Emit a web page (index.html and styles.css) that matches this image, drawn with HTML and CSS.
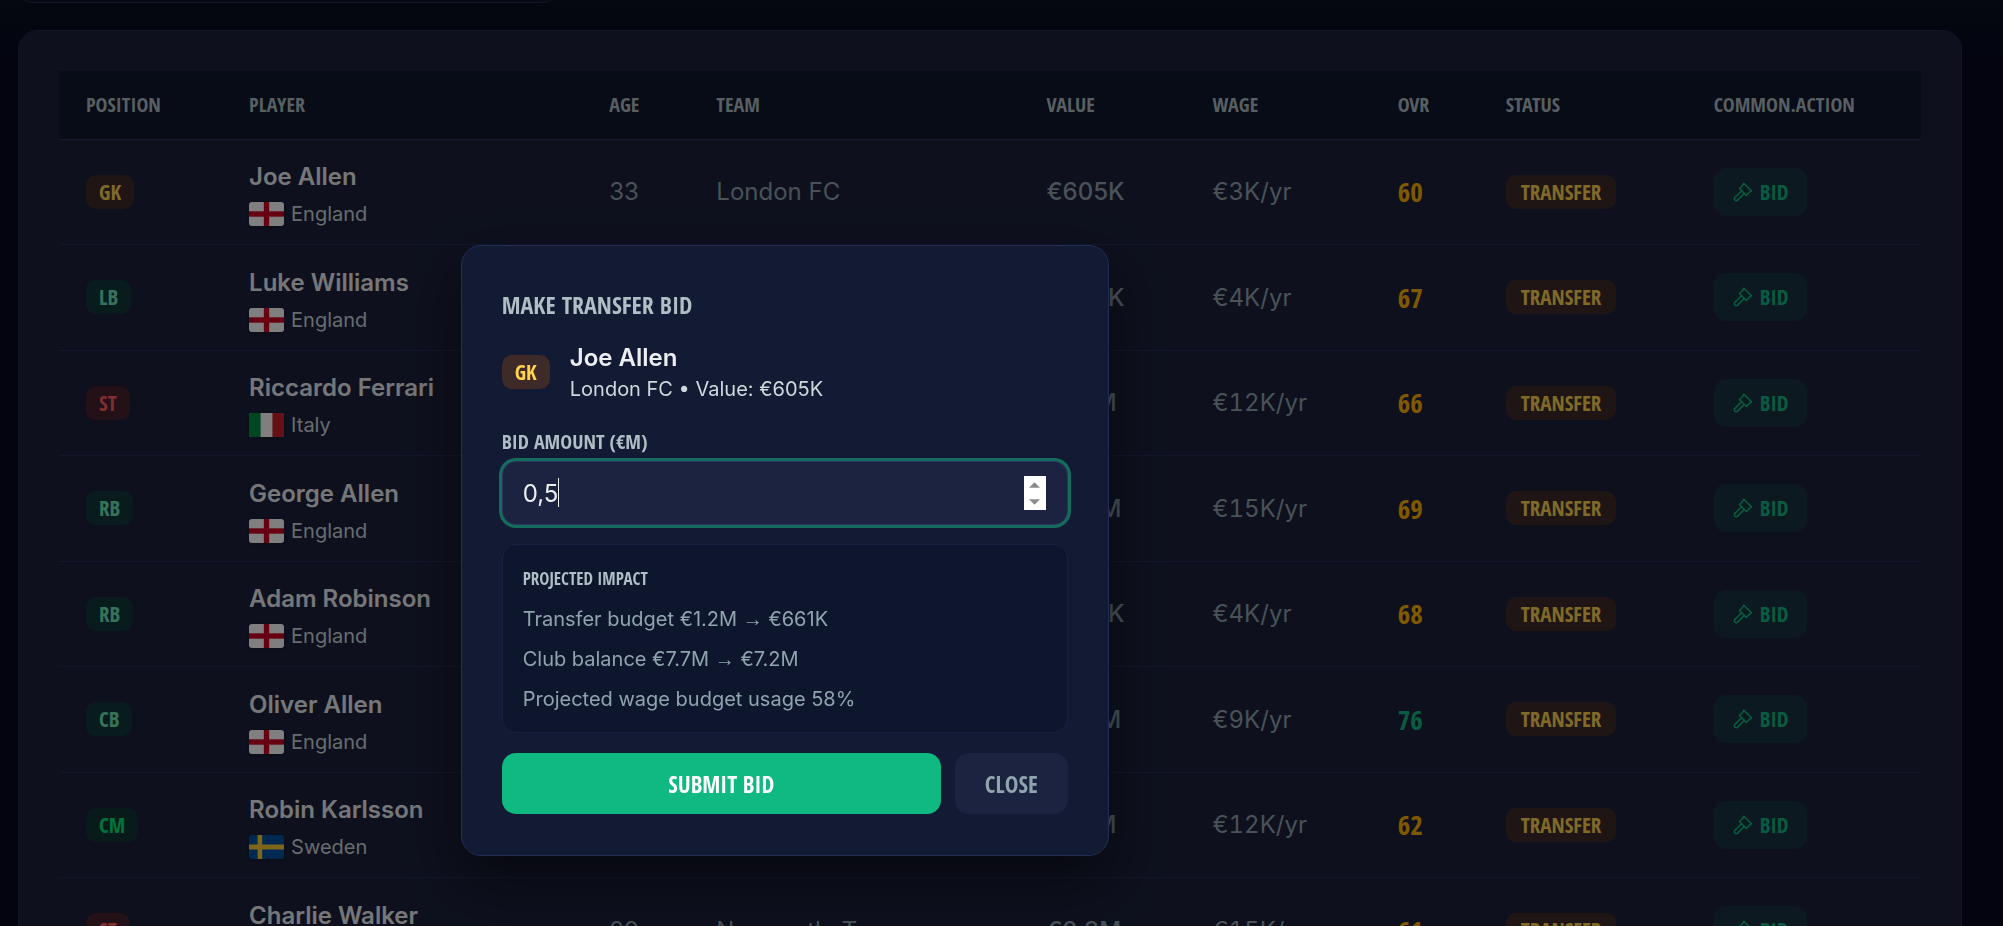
FILE: index.html
```html
<!DOCTYPE html>
<html lang="en">
<head>
  <meta charset="UTF-8" />
  <meta name="viewport" content="width=device-width, initial-scale=1.0" />
  <title>Transfer Market</title>
  <link rel="stylesheet" href="styles.css">
</head>
<body>
  <svg class="sprite" aria-hidden="true">
    <symbol id="gavel" viewBox="0 0 20 20">
      <path d="M10.8 1.2 18.5 8.9 16.4 10.4 13.3 13.5 6.5 6.5 9.3 3.8Z" />
      <path d="M8.6 8.7 1.9 15.4a1.9 1.9 0 0 0 2.7 2.7L11.3 11.4" />
    </symbol>
    <symbol id="flag-en" viewBox="0 0 35 24">
      <path fill="#fff" d="M0 0h35v24H0z" />
      <path fill="#e9a0b0" d="M14.5 0h6v24h-6zM0 9h35v6H0z" />
      <path fill="#ce0020" d="M15 0h5v24h-5zM0 9.5h35v5H0z" />
    </symbol>
    <symbol id="flag-it" viewBox="0 0 35 24">
      <path fill="#fff" d="M0 0h35v24H0z" />
      <path fill="#008c45" d="M0 0h11.6v24H0z" />
      <path fill="#cd212a" d="M23.4 0H35v24H23.4z" />
    </symbol>
    <symbol id="flag-se" viewBox="0 0 35 24">
      <path fill="#0052a4" d="M0 0h35v24H0z" />
      <path fill="#fecb34" d="M8.6 0h4.6v24H8.6zM0 9.6h35v4.8H0z" />
    </symbol>
  </svg>

  <div class="filters"></div>

  <main class="panel">
    <table class="players">
      <colgroup>
        <col class="col-pos"><col class="col-player"><col class="col-age"><col class="col-team"><col class="col-value"><col class="col-wage"><col class="col-ovr"><col class="col-status"><col class="col-action">
      </colgroup>
      <thead>
        <tr>
          <th>Position</th><th>Player</th><th>Age</th><th>Team</th><th>Value</th><th>Wage</th><th>OVR</th><th>Status</th><th>common.action</th>
        </tr>
      </thead>
      <tbody>
        <tr>
          <td><span class="badge gk">GK</span></td>
          <td><div class="name">Joe Allen</div><div class="nation"><svg class="flag"><use href="#flag-en" /></svg>England</div></td>
          <td>33</td><td>London FC</td><td class="value">€605K</td><td class="wage">€3K/yr</td>
          <td class="ovr">60</td>
          <td><span class="badge listed">TRANSFER</span></td>
          <td><button class="bid"><svg class="icon"><use href="#gavel" /></svg>BID</button></td>
        </tr>
        <tr>
          <td><span class="badge def">LB</span></td>
          <td><div class="name">Luke Williams</div><div class="nation"><svg class="flag"><use href="#flag-en" /></svg>England</div></td>
          <td>27</td><td>London FC</td><td class="value">€905K</td><td class="wage">€4K/yr</td>
          <td class="ovr">67</td>
          <td><span class="badge listed">TRANSFER</span></td>
          <td><button class="bid"><svg class="icon"><use href="#gavel" /></svg>BID</button></td>
        </tr>
        <tr>
          <td><span class="badge st">ST</span></td>
          <td><div class="name">Riccardo Ferrari</div><div class="nation"><svg class="flag"><use href="#flag-it" /></svg>Italy</div></td>
          <td>28</td><td>London FC</td><td class="value">€1.9M</td><td class="wage">€12K/yr</td>
          <td class="ovr">66</td>
          <td><span class="badge listed">TRANSFER</span></td>
          <td><button class="bid"><svg class="icon"><use href="#gavel" /></svg>BID</button></td>
        </tr>
        <tr>
          <td><span class="badge def">RB</span></td>
          <td><div class="name">George Allen</div><div class="nation"><svg class="flag"><use href="#flag-en" /></svg>England</div></td>
          <td>26</td><td>London FC</td><td class="value">€2.9M</td><td class="wage">€15K/yr</td>
          <td class="ovr">69</td>
          <td><span class="badge listed">TRANSFER</span></td>
          <td><button class="bid"><svg class="icon"><use href="#gavel" /></svg>BID</button></td>
        </tr>
        <tr>
          <td><span class="badge def">RB</span></td>
          <td><div class="name">Adam Robinson</div><div class="nation"><svg class="flag"><use href="#flag-en" /></svg>England</div></td>
          <td>31</td><td>London FC</td><td class="value">€905K</td><td class="wage">€4K/yr</td>
          <td class="ovr">68</td>
          <td><span class="badge listed">TRANSFER</span></td>
          <td><button class="bid"><svg class="icon"><use href="#gavel" /></svg>BID</button></td>
        </tr>
        <tr>
          <td><span class="badge def">CB</span></td>
          <td><div class="name">Oliver Allen</div><div class="nation"><svg class="flag"><use href="#flag-en" /></svg>England</div></td>
          <td>30</td><td>London FC</td><td class="value">€2.6M</td><td class="wage">€9K/yr</td>
          <td class="ovr high">76</td>
          <td><span class="badge listed">TRANSFER</span></td>
          <td><button class="bid"><svg class="icon"><use href="#gavel" /></svg>BID</button></td>
        </tr>
        <tr>
          <td><span class="badge mid">CM</span></td>
          <td><div class="name">Robin Karlsson</div><div class="nation"><svg class="flag"><use href="#flag-se" /></svg>Sweden</div></td>
          <td>24</td><td>London FC</td><td class="value">€1.8M</td><td class="wage">€12K/yr</td>
          <td class="ovr">62</td>
          <td><span class="badge listed">TRANSFER</span></td>
          <td><button class="bid"><svg class="icon"><use href="#gavel" /></svg>BID</button></td>
        </tr>
        <tr>
          <td><span class="badge st">ST</span></td>
          <td><div class="name">Charlie Walker</div><div class="nation"><svg class="flag"><use href="#flag-en" /></svg>England</div></td>
          <td>29</td><td>Newcastle T</td><td class="value">€2.3M</td><td class="wage">€15K/yr</td>
          <td class="ovr">61</td>
          <td><span class="badge listed">TRANSFER</span></td>
          <td><button class="bid"><svg class="icon"><use href="#gavel" /></svg>BID</button></td>
        </tr>
      </tbody>
    </table>
  </main>

  <div class="overlay">
    <form class="modal" role="dialog" aria-labelledby="modal-title" onsubmit="return false">
      <h2 class="modal-title" id="modal-title">Make transfer bid</h2>
      <div class="target">
        <span class="badge gk">GK</span>
        <div>
          <div class="target-name">Joe Allen</div>
          <div class="target-info">London FC • Value: €605K</div>
        </div>
      </div>
      <label class="field-label" for="bid-amount">Bid amount (€M)</label>
      <div class="field">
        <input type="text" id="bid-amount" inputmode="decimal" value="0,5" />
        <span class="caret"></span>
        <div class="spinner">
          <button type="button" aria-label="Increase"><svg viewBox="0 0 12 6"><path d="M6 0 12 6H0z" /></svg></button>
          <button type="button" aria-label="Decrease"><svg viewBox="0 0 12 6"><path d="M0 0h12L6 6z" /></svg></button>
        </div>
      </div>
      <section class="impact">
        <h3>Projected impact</h3>
        <p>Transfer budget €1.2M <span class="arrow">→</span> €661K</p>
        <p>Club balance €7.7M <span class="arrow">→</span> €7.2M</p>
        <p>Projected wage budget usage 58%</p>
      </section>
      <div class="actions">
        <button class="submit" type="submit">SUBMIT BID</button>
        <button class="close" type="button">CLOSE</button>
      </div>
    </form>
  </div>
</body>
</html>
```
FILE: styles.css
```css
* {
  box-sizing: border-box;
}
body {
  margin: 0;
  padding: 0 41px 0 18px;
  height: 100vh;
  overflow: hidden;
  font-family: Inter, sans-serif;
  font-size: 24px;
  color: #90a4ae;
  background: linear-gradient(#08101f, #070920 60px, #06081e);
}
button,
input {
  font-family: inherit;
  border: none;
}
h2,
h3,
p {
  margin: 0;
}
.sprite {
  display: none;
}
.filters {
  width: 539px;
  height: 80px;
  margin-top: -77px;
  border: 1px solid #222a4e;
  border-radius: 14px;
  background: #0c1428;
}
.panel {
  margin-top: 27px;
  padding: 40px;
  background: #1c213c;
  border: 1px solid #222a50;
  border-radius: 20px;
}
.players {
  width: 100%;
  table-layout: fixed;
  border-collapse: collapse;
}
.col-pos { width: 163px; }
.col-player { width: 360px; }
.col-age { width: 107px; }
.col-team { width: 330px; }
.col-value { width: 166px; }
.col-wage { width: 185px; }
.col-ovr { width: 108px; }
.col-status { width: 208px; }
.col-action { width: 234px; }
th {
  height: 68px;
  padding: 0 27px;
  text-align: left;
  font-family: "Open Sans Condensed", "Open Sans", sans-serif;
  font-size: 20px;
  font-weight: 700;
  text-transform: uppercase;
  color: #b0bec5;
  background: #10182c;
  border-bottom: 1px solid #2a325a;
}
td {
  height: 105px;
  padding: 0 27px;
  white-space: nowrap;
  border-bottom: 1px solid #262e58;
}
tbody tr:nth-child(even) td {
  height: 106px;
}
.name {
  padding-top: 5px;
  font-weight: 600;
  line-height: 36px;
  color: #eceff1;
}
.nation {
  display: flex;
  align-items: center;
  gap: 7px;
  margin-top: 4px;
  font-size: 20px;
  line-height: 30px;
  color: #cfd8dc;
}
.flag {
  width: 35px;
  height: 24px;
  border-radius: 3px;
  box-shadow: 0 1px 4px rgba(0, 0, 0, 0.3);
}
.badge {
  display: inline-block;
  padding: 0 13px;
  font-family: "Open Sans Condensed", "Open Sans", sans-serif;
  font-size: 21px;
  font-weight: 700;
  line-height: 34px;
  border-radius: 10px;
  vertical-align: middle;
}
.gk,
.listed {
  color: #ffd54f;
  background: #3e2a28;
}
.listed {
  padding: 0 15px;
}
.def {
  color: #6ee7b7;
  background: #10383a;
}
.mid {
  color: #00e676;
  background: #123434;
}
.st {
  color: #ff5f5f;
  background: #48202e;
}
.value {
  font-weight: 500;
}
.wage {
  font-variant-numeric: tabular-nums;
}
.ovr {
  font-family: "Open Sans Condensed", "Open Sans", sans-serif;
  font-size: 27px;
  font-weight: 700;
  color: #ffb300;
}
.high {
  color: #10b981;
}
.bid {
  display: flex;
  align-items: center;
  gap: 7px;
  height: 48px;
  padding: 0 19px;
  font-family: "Open Sans Condensed", "Open Sans", sans-serif;
  font-size: 21px;
  font-weight: 700;
  color: #10b981;
  background: #183242;
  border-radius: 12px;
}
.icon {
  width: 20px;
  height: 20px;
  fill: none;
  stroke: currentColor;
  stroke-width: 1.5;
  stroke-linejoin: round;
  stroke-linecap: round;
}

/* dialog */
.overlay {
  position: fixed;
  inset: 0;
  padding: 245px 23% 0;
  background: rgba(0, 0, 0, 0.5);
}
.modal {
  width: 100%;
  max-width: 648px;
  padding: 41px 40px;
  background: #131a33;
  border: 1px solid #232c55;
  border-radius: 20px;
  box-shadow: 0 25px 60px rgba(0, 0, 0, 0.5);
}
.modal-title {
  font-family: "Open Sans Condensed", "Open Sans", sans-serif;
  font-size: 24px;
  line-height: 36px;
  text-transform: uppercase;
  color: #b0bec5;
}
.target {
  display: flex;
  align-items: center;
  gap: 20px;
  margin-top: 18px;
}
.target-name {
  font-weight: 600;
  line-height: 34px;
  color: #eceff1;
}
.target-info {
  font-size: 20px;
  line-height: 28px;
  color: #cfd8dc;
}
.field-label {
  display: block;
  margin-top: 24px;
  font-family: "Open Sans Condensed", "Open Sans", sans-serif;
  font-size: 20px;
  font-weight: 700;
  line-height: 30px;
  text-transform: uppercase;
  color: #b0bec5;
}
.field {
  position: relative;
  margin-top: 4px;
}
.field input {
  display: block;
  width: 100%;
  height: 64px;
  padding: 0 20px;
  font-size: 24px;
  color: #eceff1;
  background: #1b2340;
  border: 1px solid #2a3560;
  border-radius: 14px;
  outline: none;
  box-shadow: 0 0 0 3px #136c5c;
}
.caret {
  position: absolute;
  left: 56px;
  top: 17px;
  width: 1px;
  height: 29px;
  background: #eceff1;
}
.spinner {
  position: absolute;
  top: 15px;
  right: 22px;
  display: flex;
  flex-direction: column;
  width: 22px;
  height: 34px;
  background: #fff;
}
.spinner button {
  display: flex;
  flex: 1;
  align-items: center;
  justify-content: center;
  padding: 0;
  background: none;
}
.spinner svg {
  width: 11px;
  height: 6px;
  fill: #8b8b8b;
}
.impact {
  margin-top: 19px;
  padding: 17px 20px;
  background: #0e162e;
  border: 1px solid #182140;
  border-radius: 14px;
}
.impact h3 {
  font-family: "Open Sans Condensed", "Open Sans", sans-serif;
  font-size: 17px;
  line-height: 33px;
  text-transform: uppercase;
  color: #b0bec5;
}
.impact p {
  margin-top: 8px;
  font-size: 20px;
  line-height: 32px;
}
.arrow {
  font-family: "Liberation Sans", sans-serif;
}
.actions {
  display: flex;
  gap: 14px;
  margin-top: 20px;
}
.submit,
.close {
  height: 61px;
  font-family: "Open Sans Condensed", "Open Sans", sans-serif;
  font-size: 23px;
  font-weight: 700;
  border-radius: 14px;
}
.submit {
  flex: 1;
  color: #fff;
  background: #10b981;
}
.close {
  padding: 0 30px;
  color: #90a4ae;
  background: #1b2340;
}
```
